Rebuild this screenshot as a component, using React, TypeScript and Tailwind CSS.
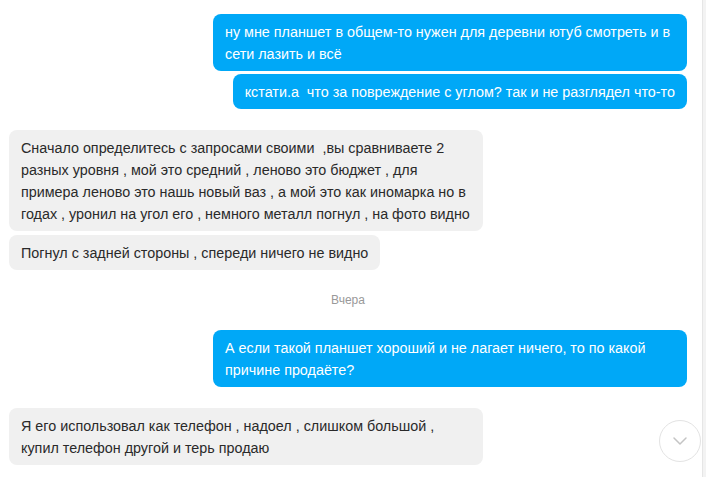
import { ChevronDown } from "lucide-react";

type Msg = { out: boolean; text: string };

const groups: Msg[][] = [
  [
    {
      out: true,
      text: "ну мне планшет в общем-то нужен для деревни ютуб смотреть и в сети лазить и всё",
    },
    { out: true, text: "кстати.а  что за повреждение с углом? так и не разглядел что-то" },
  ],
  [
    {
      out: false,
      text: "Сначало определитесь с запросами своими  ,вы сравниваете 2 разных уровня , мой это средний , леново это бюджет , для примера леново это нашь новый ваз , а мой это как иномарка но в годах , уронил на угол его , немного металл погнул , на фото видно",
    },
    { out: false, text: "Погнул с задней стороны , спереди ничего не видно" },
  ],
];

function Bubble({ m }: { m: Msg }) {
  return (
    <div className={m.out ? "flex justify-end" : "flex justify-start"}>
      <div
        className={
          "max-w-[474px] rounded-[8px] px-3 py-[6.5px] text-[14.35px] leading-[22px] whitespace-pre-wrap " +
          (m.out ? "bg-[#00a8f7] text-white" : "bg-[#f0f0f0] text-[#2a2a2a]")
        }
      >
        {m.text}
      </div>
    </div>
  );
}

export default function App() {
  return (
    <div
      className="relative flex h-[477px] w-[706px] overflow-hidden bg-white"
      style={{ fontFamily: '"Liberation Sans", Arial, sans-serif' }}
    >
      <div className="flex flex-1 flex-col pl-[9px] pr-[15px] pt-[14px]">
        <div className="flex flex-col gap-[3px]">
          {groups[0].map((m, i) => (
            <Bubble key={i} m={m} />
          ))}
        </div>
        <div className="mt-[21px] flex flex-col gap-[4px]">
          {groups[1].map((m, i) => (
            <Bubble key={i} m={m} />
          ))}
        </div>
        <div className="mt-[22px] mb-[22px] text-center text-[12px] leading-[16px] text-[#999]">
          Вчера
        </div>
        <Bubble
          m={{
            out: true,
            text: "А если такой планшет хороший и не лагает ничего, то по какой причине продаёте?",
          }}
        />
        <div className="mt-[21px]">
          <Bubble
            m={{
              out: false,
              text: "Я его использовал как телефон , надоел , слишком большой , купил телефон другой и терь продаю",
            }}
          />
        </div>
      </div>
      <div className="w-[4px] border-l border-[#e6e6e6] bg-[#f3f3f3]" />
      <button className="absolute left-[659px] top-[420px] flex h-[42px] w-[42px] items-center justify-center rounded-full border border-[#e3e3e3] bg-white">
        <ChevronDown className="h-6 w-6 text-[#c4c4c4]" strokeWidth={1.5} />
      </button>
    </div>
  );
}
